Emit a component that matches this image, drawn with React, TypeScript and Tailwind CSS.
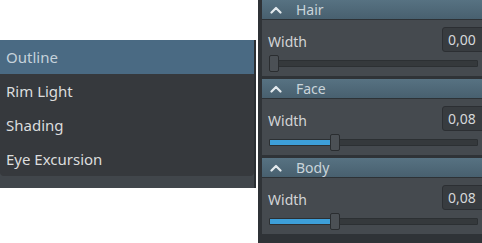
import React from "react";

const font = { fontFamily: '"Noto Sans", "Open Sans", sans-serif' };

function Chevron() {
  return (
    <svg width="12" height="8" viewBox="0 0 12 8" className="shrink-0">
      <path d="M1.5 6.5 L6 2 L10.5 6.5" fill="none" stroke="#e4eaee" strokeWidth="2.2" strokeLinecap="round" strokeLinejoin="round" />
    </svg>
  );
}

function Section({ title, value, pct, last }: { title: string; value: string; pct: number; last?: boolean }) {
  return (
    <div className={`flex flex-col ${last ? "" : "mb-[3px]"}`}>
      <div className="h-[20px] flex items-center pl-[8px] gap-[14px] bg-gradient-to-b from-[#577282] to-[#48606f] border-b border-[#2d3236] text-[#c9d4da] text-[14px]">
        <Chevron />
        <span className="leading-none">{title}</span>
      </div>
      <div className="bg-[#454a4f] h-[56px] flex flex-col pl-[6px] pt-[7px] overflow-hidden">
        <div className="flex items-center h-[25px]">
          <span className="text-[#d2d4d6] text-[14px] leading-none mt-[4px]">Width</span>
          <div className="ml-auto w-[44px] mr-[-4px] h-[25px] bg-[#383c40] border border-[#2c2f33] rounded-[3px] flex items-center pl-[5px] text-[#d5d7d9] text-[14px] shrink-0">
            {value}
          </div>
        </div>
        <div className="relative mt-[3px] h-[16px] w-[209px] ml-[1px]">
          <div className="absolute left-0 right-0 top-[5px] h-[7px] bg-[#35393c] border border-[#2c3033] rounded-[1px]" />
          {pct > 0 && (
            <div className="absolute left-[1px] top-[6px] h-[5px] bg-[#3d9fd9]" style={{ width: `${pct}px` }} />
          )}
          <div
            className="absolute top-0 w-[10px] h-[17px] bg-[#4b5055] border border-[#2a2d30] rounded-[2px]"
            style={{ left: `${pct}px` }}
          />
        </div>
      </div>
    </div>
  );
}

export default function App() {
  return (
    <div className="w-[482px] h-[243px] bg-white flex items-start overflow-hidden" style={font}>
      <div className="w-[256px] mt-[40px] flex flex-col bg-[#41464b] border-r-2 border-[#2c3034]">
        <div className="bg-[#36393d] rounded-b-[4px] flex flex-col">
          <div className="h-[34px] flex items-center pl-[6px] bg-[#4a6a83] text-[#c5d2db] text-[15px]">Outline</div>
          <div className="h-[34px] flex items-center pl-[6px] text-[#dcdddd] text-[15px]">Rim Light</div>
          <div className="h-[34px] flex items-center pl-[6px] text-[#dcdddd] text-[15px]">Shading</div>
          <div className="h-[34px] flex items-center pl-[6px] text-[#dcdddd] text-[15px]">Eye Excursion</div>
        </div>
        <div className="h-[12px]" />
      </div>
      <div className="ml-[2px] w-[224px] h-[243px] bg-[#2f3337] pl-[4px] flex flex-col overflow-hidden">
        <Section title="Hair" value="0,00" pct={0} />
        <Section title="Face" value="0,08" pct={61} />
        <Section title="Body" value="0,08" pct={61} last />
      </div>
    </div>
  );
}
